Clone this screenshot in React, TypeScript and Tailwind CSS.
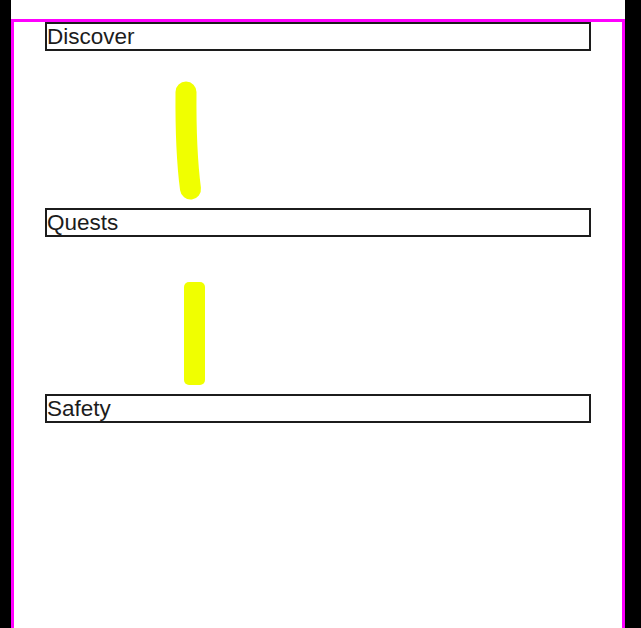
const sections = ['Discover', 'Quests', 'Safety']

function Stroke({ index }: { index: number }) {
  if (index === 0) {
    return (
      <svg width="546" height="157" viewBox="0 0 546 157" className="block">
        <path d="M141 41 Q140.5 100 145.5 138" fill="none" stroke="#f0ff00" strokeWidth="21" strokeLinecap="round" />
      </svg>
    )
  }
  if (index === 1) {
    return (
      <svg width="546" height="157" viewBox="0 0 546 157" className="block">
        <rect x="139" y="45" width="21" height="103" rx="5" fill="#f0ff00" />
      </svg>
    )
  }
  return null
}

export default function App() {
  return (
    <div className="h-[628px] w-[641px] overflow-hidden bg-black">
      <div className="ml-[11px] w-[614px] bg-white pt-[19px] min-h-[700px]">
        <div className="min-h-[700px] border-[3px] border-b-0 border-[#ff00ff]">
          <div className="mx-[31px] flex flex-col">
            {sections.map((name, i) => (
              <div key={name}>
                <div className="border-2 border-[#1c1c1c] text-[22.5px] leading-[25px] text-[#1c1c1c] font-['Liberation_Sans',Arial,sans-serif]">
                  {name}
                </div>
                <Stroke index={i} />
              </div>
            ))}
          </div>
        </div>
      </div>
    </div>
  )
}
